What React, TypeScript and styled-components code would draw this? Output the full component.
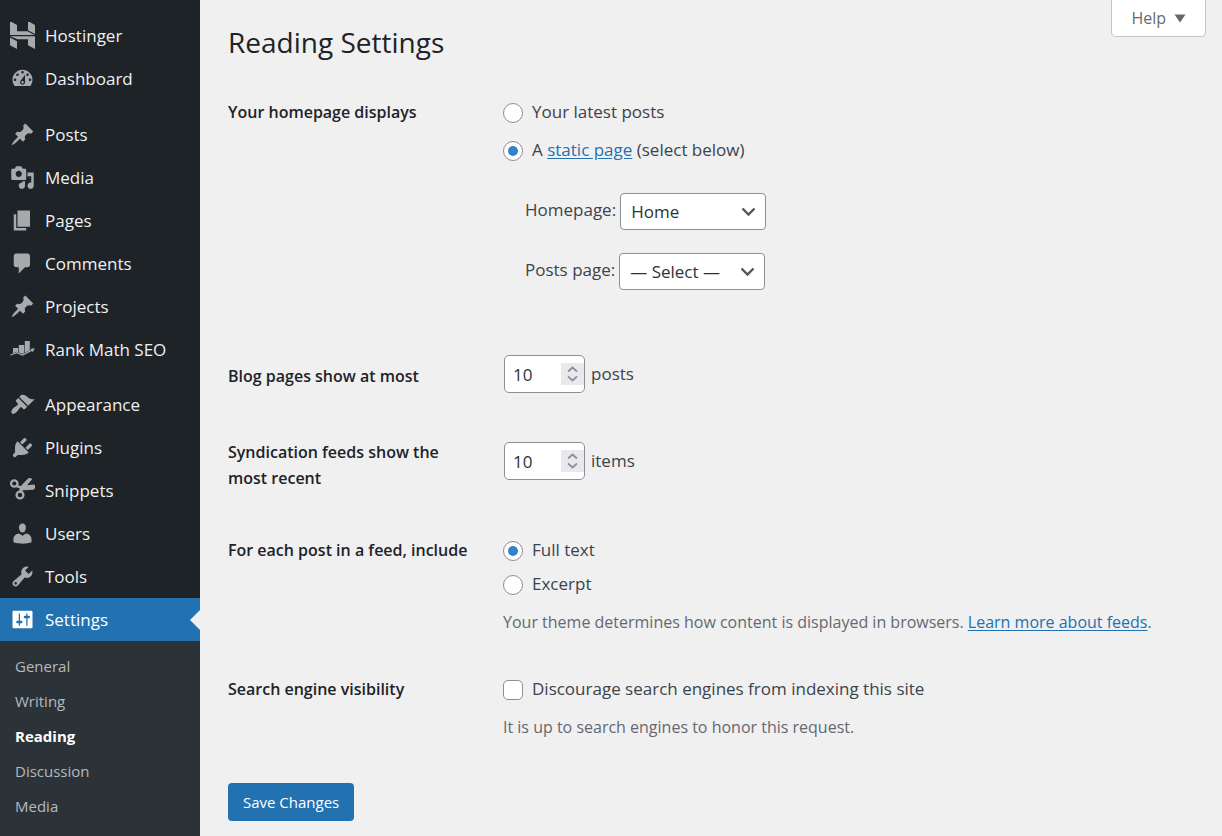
import React from "react";
import styled, { createGlobalStyle, css } from "styled-components";

const GlobalStyle = createGlobalStyle`
  *, *::before, *::after { box-sizing: border-box; }
  html, body { margin: 0; padding: 0; }
  body {
    background: #f0f0f1;
    color: #3c434a;
    font-family: "Open Sans", "Noto Sans", sans-serif;
    font-size: 17px;
    line-height: 26px;
  }
  button, input, select { font-family: inherit; }
`;

const Layout = styled.div`
  display: grid;
  grid-template-columns: 200px minmax(0, 1fr);
  height: 100vh;
  overflow: hidden;
`;

const Sidebar = styled.nav`
  background: #1d2327;
  padding-top: 14px;
  overflow: hidden;
`;

const MenuGroup = styled.ul`
  list-style: none;
  margin: 0;
  padding: 0 0 13px;

  & + & { padding-bottom: 12px; }
`;

const MenuLink = styled.a<{ $current?: boolean }>`
  position: relative;
  display: flex;
  align-items: center;
  gap: 10px;
  height: 43px;
  padding: 0 10px;
  color: ${(p) => (p.$current ? "#fff" : "#f0f0f1")};
  background: ${(p) => (p.$current ? "#2271b1" : "transparent")};
  text-decoration: none;

  svg {
    flex: none;
    width: 25px;
    height: 25px;
    fill: ${(p) => (p.$current ? "#fff" : "#a7aaad")};
  }

  ${(p) =>
    p.$current &&
    css`
      &::after {
        content: "";
        position: absolute;
        right: 0;
        top: 50%;
        margin-top: -10px;
        border: 10px solid transparent;
        border-left-width: 0;
        border-right-color: #f0f0f1;
      }
    `}
`;

const Submenu = styled.ul`
  list-style: none;
  margin: 0;
  padding: 8px 0 60px;
  background: #2c3338;
`;

const SubmenuLink = styled.a<{ $current?: boolean }>`
  display: block;
  padding: 0 15px;
  font-size: 15px;
  line-height: 35px;
  font-weight: ${(p) => (p.$current ? 700 : 400)};
  color: ${(p) => (p.$current ? "#fff" : "#b4b9be")};
  text-decoration: none;
`;

const Content = styled.main`
  position: relative;
  padding: 23px 16px 16px 28px;
`;

const HelpButton = styled.button`
  position: absolute;
  top: 0;
  right: 16px;
  display: flex;
  align-items: center;
  gap: 8px;
  height: 37px;
  padding: 0 19px;
  border: 1px solid #c3c4c7;
  border-top: 0;
  border-radius: 0 0 5px 5px;
  background: #fff;
  color: #646970;
  font-size: 16px;
  line-height: 24px;

  svg { fill: #646970; }
`;

const Title = styled.h1`
  margin: 0 0 13px;
  color: #1d2327;
  font-size: 28px;
  font-weight: 400;
  line-height: 38px;
`;

const Row = styled.div`
  display: grid;
  grid-template-columns: 275px minmax(0, 1fr);
`;

const RowLabel = styled.div`
  padding: 25px 24px 21px 0;
  color: #1d2327;
  font-size: 16px;
  font-weight: 600;
`;

const Field = styled.div<{ $inline?: boolean; $last?: number }>`
  ${(p) =>
    p.$inline
      ? css`
          display: flex;
          align-items: center;
          align-self: center;
          gap: 6px;
          padding: 17px 0 21px 1px;
        `
      : css`
          padding: 25px 0 ${p.$last ?? 16}px;
        `}
`;

const Options = styled.div<{ $gap: number }>`
  display: flex;
  flex-direction: column;
  gap: ${(p) => p.$gap}px;
`;

const Option = styled.div`
  display: flex;
  align-items: flex-start;
  gap: 9px;
`;

const choiceBox = css`
  appearance: none;
  flex: none;
  display: grid;
  place-items: center;
  width: 20px;
  height: 20px;
  margin: 4px 0 0;
  border: 1px solid #8c8f94;
  background: #fff;
`;

const Radio = styled.input.attrs({ type: "radio" })`
  ${choiceBox}
  border-radius: 50%;

  &:checked::before {
    content: "";
    width: 10px;
    height: 10px;
    border-radius: 50%;
    background: #3582c4;
  }
`;

const Checkbox = styled.input.attrs({ type: "checkbox" })`
  ${choiceBox}
  border-radius: 5px;

  &:checked { background: #3582c4; }
`;

const Link = styled.a`
  color: #2271b1;
  text-decoration: underline;
  text-underline-offset: 2px;
`;

const PageSelects = styled.div`
  display: flex;
  flex-direction: column;
  gap: 23px;
  margin: 30px 0 0 22px;
`;

const SelectLine = styled.div`
  display: flex;
  align-items: center;
  gap: 4px;

  label { padding-bottom: 3px; }
`;

const SelectBox = styled.div`
  position: relative;
  width: 146px;

  svg {
    position: absolute;
    right: 10px;
    top: 11px;
    pointer-events: none;
  }
`;

const Select = styled.select`
  appearance: none;
  display: block;
  width: 100%;
  height: 37px;
  padding: 0 30px 0 10px;
  border: 1px solid #8c8f94;
  border-radius: 4px;
  background: #fff;
  color: #2c3338;
  font-size: 17px;
  line-height: 26px;
`;

const NumberBox = styled.div`
  position: relative;
  width: 81px;

  svg {
    position: absolute;
    right: 1px;
    top: 8px;
    pointer-events: none;
  }
`;

const NumberInput = styled.input.attrs({ type: "number" })`
  appearance: textfield;
  display: block;
  width: 100%;
  height: 38px;
  padding: 0 26px 0 8px;
  border: 1px solid #8c8f94;
  border-radius: 5px;
  background: #fff;
  color: #2c3338;
  font-size: 17px;

  &::-webkit-inner-spin-button { appearance: none; margin: 0; }
`;

const Description = styled.p`
  margin: 12px 0 0;
  color: #646970;
  font-size: 16px;
`;

const SaveButton = styled.button`
  height: 38px;
  margin-top: 27px;
  padding: 0 15px;
  border: 0;
  border-radius: 4px;
  background: #2271b1;
  color: #fff;
  font-size: 15px;
  line-height: 38px;
`;

const PIN =
  "M10.44 3.02l1.82-1.82 6.36 6.35-1.83 1.82c-1.05-.68-2.48-.57-3.41.36l-.75.75c-.92.93-1.04 2.35-.35 3.41l-1.83 1.82-2.41-2.41-2.8 2.79c-.42.42-3.38 2.71-3.8 2.29s1.86-3.39 2.28-3.81l2.79-2.79L4.1 9.36l1.83-1.82c1.05.69 2.48.57 3.4-.36l.75-.75c.93-.92 1.05-2.35.36-3.41z";

const path = (d: string) => (
  <svg viewBox="0 0 20 20" aria-hidden="true">
    <path fillRule="evenodd" d={d} />
  </svg>
);

const HostingerIcon = (
  <svg viewBox="0 1 25 28" aria-hidden="true" style={{ height: 28 }}>
    <path d="M0 0L7 4V10.2H17.5L24.5 14H0zM18 0L25 4V13L18 9.2zM0 15.2H25V28L18 24.3V18.3H7.5zM0 16.5L7 20.2V28L0 24.3z" />
  </svg>
);

const RankMathIcon = (
  <svg viewBox="0 0 25 25" aria-hidden="true">
    <path d="M3 11h5.200v4.500l-1.200-.8-4 1.500zM8.800 8h5.400v8.200l-1.700.6-3.700-1.400zM14.800 4h5v9.200l-5 2.600z" />
    <path d="M.5 18L7 15.700L12.500 18L22.500 12.800" fill="none" stroke="#a7aaad" strokeWidth="1.300" />
    <path d="M20.500 11.800l4.300-.6-1.900 4z" />
  </svg>
);

const ScissorsIcon = (
  <svg viewBox="0 2 25 25" aria-hidden="true">
    <circle cx="4.300" cy="7.500" r="3.200" fill="none" stroke="#a7aaad" strokeWidth="2.300" />
    <circle cx="10" cy="19" r="3.400" fill="none" stroke="#a7aaad" strokeWidth="2.300" />
    <path d="M6.800 9l4 1L17.500 3c1.200-1.300 3.700-1.300 4.700.3L17 9.200l7.200-.6c1.400 1 1.400 4-1 5.200L13 14.200l-1.600 3-2.800-1.200 1.200-3.500-4-1.500z" />
  </svg>
);

type Entry = { name: string; icon: React.ReactNode; current?: boolean };

const menu: Entry[][] = [
  [
    { name: "Hostinger", icon: HostingerIcon },
    {
      name: "Dashboard",
      icon: path(
        "M3.76 16h12.48c1.1-1.37 1.76-3.11 1.76-5 0-4.42-3.58-8-8-8s-8 3.58-8 8c0 1.89.66 3.63 1.76 5zM10 4c.55 0 1 .45 1 1s-.45 1-1 1-1-.45-1-1 .45-1 1-1zM6 6c.55 0 1 .45 1 1s-.45 1-1 1-1-.45-1-1 .45-1 1-1zm8 0c.55 0 1 .45 1 1s-.45 1-1 1-1-.45-1-1 .45-1 1-1zm-5.37 5.55L12 7v6c0 1.1-.9 2-2 2s-2-.9-2-2c0-.57.24-1.08.63-1.45zM4 10c.55 0 1 .45 1 1s-.45 1-1 1-1-.45-1-1 .45-1 1-1zm12 0c.55 0 1 .45 1 1s-.45 1-1 1-1-.45-1-1 .45-1 1-1zm-5 3c0-.55-.45-1-1-1s-1 .45-1 1 .45 1 1 1 1-.45 1-1z"
      ),
    },
  ],
  [
    { name: "Posts", icon: path(PIN) },
    {
      name: "Media",
      icon: path(
        "M13 11V4c0-.55-.45-1-1-1h-1.67L9 1H5L3.67 3H2c-.55 0-1 .45-1 1v7c0 .55.45 1 1 1h10c.55 0 1-.45 1-1zM7 4.5c1.38 0 2.5 1.12 2.5 2.5S8.38 9.5 7 9.5 4.5 8.38 4.5 7 5.62 4.5 7 4.5zM14 6h5v10.5c0 1.38-1.12 2.5-2.5 2.5S14 17.88 14 16.5s1.12-2.5 2.5-2.5c.17 0 .34.02.5.05V9h-3V6zm-4 8.05V13h2v3.5c0 1.38-1.12 2.5-2.5 2.5S7 17.88 7 16.5 8.12 14 9.5 14c.17 0 .34.02.5.05z"
      ),
    },
    { name: "Pages", icon: path("M6 15V2h10v13H6zm-1 1h8v2H3V5h2v11z") },
    {
      name: "Comments",
      icon: path(
        "M5 2h9c1.1 0 2 .9 2 2v7c0 1.1-.9 2-2 2h-2l-5 5v-5H5c-1.1 0-2-.9-2-2V4c0-1.1.9-2 2-2z"
      ),
    },
    { name: "Projects", icon: path(PIN) },
    { name: "Rank Math SEO", icon: RankMathIcon },
  ],
  [
    {
      name: "Appearance",
      icon: path(
        "M14.48 11.06L7.41 3.99l1.5-1.5c.5-.56 2.3-.47 3.51.32 1.21.8 1.43 1.28 2.91 2.1 1.18.64 2.45 1.26 4.45.85zm-.71.71L6.7 4.7 4.93 6.47c-.39.39-.39 1.02 0 1.41l1.06 1.06c.39.39.39 1.03 0 1.42-.6.6-1.43 1.11-2.21 1.69-.35.26-.7.53-1.01.84C1.43 14.23.4 16.08 1.4 17.07c.99 1 2.84-.03 4.18-1.36.31-.31.58-.66.85-1.02.57-.78 1.08-1.61 1.69-2.21.39-.39 1.02-.39 1.41 0l1.06 1.06c.39.39 1.02.39 1.41 0z"
      ),
    },
    {
      name: "Plugins",
      icon: path(
        "M13.11 4.36L9.87 7.6 8 5.73l3.24-3.24c.35-.34 1.05-.2 1.56.32.52.51.66 1.21.31 1.55zm-8 1.77l.91-1.12 9.01 9.01-1.19.84c-.71.71-2.63 1.16-3.82 1.16H6.14L4.9 17.26c-.59.59-1.54.59-2.12 0-.59-.58-.59-1.53 0-2.12l1.24-1.24v-3.88c0-1.13.4-3.19 1.09-3.89zm7.26 3.97l3.24-3.24c.34-.35 1.04-.21 1.55.31.52.51.66 1.21.31 1.55l-3.24 3.25z"
      ),
    },
    { name: "Snippets", icon: ScissorsIcon },
    {
      name: "Users",
      icon: path(
        "M10 9.25c-2.27 0-2.73-3.44-2.73-3.44C7 4.02 7.82 2 9.97 2c2.16 0 2.98 2.02 2.71 3.81 0 0-.41 3.44-2.68 3.44zm0 2.57L12.72 10c2.39 0 4.52 2.33 4.52 4.53v2.49s-3.65 1.13-7.24 1.13c-3.65 0-7.24-1.13-7.24-1.13v-2.49c0-2.25 1.94-4.48 4.47-4.48z"
      ),
    },
    {
      name: "Tools",
      icon: path(
        "M16.68 9.77c-1.34 1.34-3.3 1.67-4.95.99l-5.41 6.52c-.99.99-2.59.99-3.58 0s-.99-2.59 0-3.57l6.52-5.42c-.68-1.65-.35-3.61.99-4.95 1.28-1.28 3.12-1.62 4.72-1.06l-2.89 2.89 2.82 2.82 2.86-2.87c.53 1.58.18 3.39-1.08 4.65zM3.81 16.21c.4.39 1.04.39 1.43 0 .4-.4.4-1.04 0-1.43-.39-.4-1.03-.4-1.43 0-.39.39-.39 1.03 0 1.43z"
      ),
    },
    {
      name: "Settings",
      current: true,
      icon: path(
        "M18 16V4c0-.55-.45-1-1-1H3c-.55 0-1 .45-1 1v12c0 .55.45 1 1 1h14c.55 0 1-.45 1-1zM8 11h1c.55 0 1 .45 1 1s-.45 1-1 1H8v1.5c0 .28-.22.5-.5.5s-.5-.22-.5-.5V13H6c-.55 0-1-.45-1-1s.45-1 1-1h1V5.5c0-.28.22-.5.5-.5s.5.22.5.5V11zm5-2h-1c-.55 0-1-.45-1-1s.45-1 1-1h1V5.5c0-.28.22-.5.5-.5s.5.22.5.5V7h1c.55 0 1 .45 1 1s-.45 1-1 1h-1v5.5c0 .28-.22.5-.5.5s-.5-.22-.5-.5V9z"
      ),
    },
  ],
];

const submenu = ["General", "Writing", "Reading", "Discussion", "Media"];

const PageSelect = ({ id, label, value }: { id: string; label: string; value: string }) => (
  <SelectLine>
    <label htmlFor={id}>{label}</label>
    <SelectBox>
      <Select id={id}>
        <option>{value}</option>
      </Select>
      <svg width="15" height="15" viewBox="0 0 15 15" fill="none" stroke="#50575e" strokeWidth="2.4" aria-hidden="true">
        <path d="M1.500 4.500l6 6 6-6" />
      </svg>
    </SelectBox>
  </SelectLine>
);

const NumberField = ({ id, unit }: { id: string; unit: string }) => (
  <>
    <NumberBox>
      <NumberInput id={id} defaultValue={10} min={1} />
      <svg width="23" height="22" viewBox="0 0 23 22" fill="none" stroke="#8f8f9d" strokeWidth="1.8" aria-hidden="true">
        <rect width="23" height="22" fill="#e9e9ed" stroke="none" />
        <path d="M7 8.500L11.500 4.500L16 8.500M7 13.500L11.500 17.500L16 13.500" />
      </svg>
    </NumberBox>
    <span>{unit}</span>
  </>
);

export default function App() {
  return (
    <>
      <GlobalStyle />
      <Layout>
        <Sidebar>
          {menu.map((group, i) => (
            <MenuGroup key={i}>
              {group.map((item) => (
                <li key={item.name}>
                  <MenuLink href="#" $current={item.current}>
                    {item.icon}
                    {item.name}
                  </MenuLink>
                  {item.current && (
                    <Submenu>
                      {submenu.map((name) => (
                        <li key={name}>
                          <SubmenuLink href="#" $current={name === "Reading"}>
                            {name}
                          </SubmenuLink>
                        </li>
                      ))}
                    </Submenu>
                  )}
                </li>
              ))}
            </MenuGroup>
          ))}
        </Sidebar>

        <Content>
          <HelpButton type="button">
            Help
            <svg width="12" height="9" viewBox="0 0 12 9" aria-hidden="true">
              <path d="M0.500 0.500h11L6 8.500z" />
            </svg>
          </HelpButton>
          <Title>Reading Settings</Title>
          <form>
            <Row role="group" aria-labelledby="front">
              <RowLabel id="front">Your homepage displays</RowLabel>
              <Field $last={48}>
                <Options $gap={12}>
                  <Option>
                    <Radio name="front" id="latest" />
                    <label htmlFor="latest">Your latest posts</label>
                  </Option>
                  <Option>
                    <Radio name="front" id="static" defaultChecked />
                    <label htmlFor="static">
                      A <Link href="#">static page</Link> (select below)
                    </label>
                  </Option>
                </Options>
                <PageSelects>
                  <PageSelect id="homepage" label="Homepage:" value="Home" />
                  <PageSelect id="postspage" label="Posts page:" value="— Select —" />
                </PageSelects>
              </Field>
            </Row>
            <Row>
              <RowLabel as="label" htmlFor="perpage">Blog pages show at most</RowLabel>
              <Field $inline>
                <NumberField id="perpage" unit="posts" />
              </Field>
            </Row>
            <Row>
              <RowLabel as="label" htmlFor="feeditems">Syndication feeds show the most recent</RowLabel>
              <Field $inline>
                <NumberField id="feeditems" unit="items" />
              </Field>
            </Row>
            <Row role="group" aria-labelledby="feed">
              <RowLabel id="feed">For each post in a feed, include</RowLabel>
              <Field>
                <Options $gap={8}>
                  <Option>
                    <Radio name="feed" id="full" defaultChecked />
                    <label htmlFor="full">Full text</label>
                  </Option>
                  <Option>
                    <Radio name="feed" id="excerpt" />
                    <label htmlFor="excerpt">Excerpt</label>
                  </Option>
                </Options>
                <Description>
                  Your theme determines how content is displayed in browsers.{" "}
                  <Link href="#">Learn more about feeds</Link>.
                </Description>
              </Field>
            </Row>
            <Row role="group" aria-labelledby="visibility">
              <RowLabel id="visibility">Search engine visibility</RowLabel>
              <Field>
                <Option>
                  <Checkbox id="noindex" />
                  <label htmlFor="noindex">Discourage search engines from indexing this site</label>
                </Option>
                <Description>It is up to search engines to honor this request.</Description>
              </Field>
            </Row>
            <SaveButton type="button">Save Changes</SaveButton>
          </form>
        </Content>
      </Layout>
    </>
  );
}
